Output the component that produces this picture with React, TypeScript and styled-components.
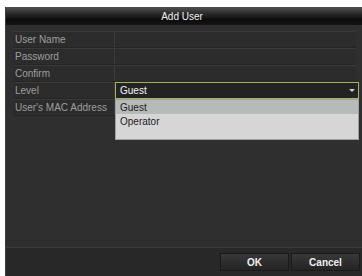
import React from "react";
import styled, { createGlobalStyle } from "styled-components";

const Global = createGlobalStyle`
  html, body { margin: 0; padding: 0; background: #ffffff; }
  body { font-family: "Liberation Sans", Arial, sans-serif; }
`;

const Frame = styled.div`
  margin: 7px 0 0 5px;
  width: 357px;
  height: 269px;
  background: #2f2f2f;
  display: flex;
  flex-direction: column;
  border-left: 1px solid #3c3c3c;
  box-sizing: border-box;
`;

const TitleBar = styled.div`
  height: 18px;
  background: linear-gradient(#525252 0%, #2c2c2c 35%, #0c0c0c 70%, #141414 100%);
  color: #f0f0f0;
  font-size: 10px;
  display: flex;
  align-items: center;
  justify-content: center;
  padding-right: 4px;
`;

const Body = styled.div`
  flex: 1;
  padding: 6px 0 0 7px;
  position: relative;
`;

const Form = styled.div`
  display: flex;
  flex-direction: column;
  width: 343px;
  position: relative;
`;

const Row = styled.div`
  display: grid;
  grid-template-columns: 102px 1fr;
  height: 17px;
  border-bottom: 1px solid #262626;
  border-top: 1px solid #393939;
  box-sizing: border-box;
  background: #2c2c2c;
`;

const Label = styled.div`
  color: #9e9e9e;
  font-size: 10px;
  display: flex;
  align-items: center;
  padding-left: 2px;
  border-right: 1px solid #3a3a3a;
  white-space: nowrap;
`;

const Value = styled.div`
  position: relative;
`;

const Select = styled.div`
  position: absolute;
  left: 0;
  right: -3px;
  top: -1px;
  height: 17px;
  box-sizing: border-box;
  border: 1px solid #a8b45a;
  background: #232323;
  color: #f4f4f4;
  font-size: 10px;
  display: flex;
  align-items: center;
  padding-left: 4px;
  justify-content: space-between;
`;

const Arrow = styled.span`
  width: 0;
  height: 0;
  border-left: 3px solid transparent;
  border-right: 3px solid transparent;
  border-top: 3px solid #d0d0d0;
  margin-right: 3px;
`;

const Dropdown = styled.div`
  position: absolute;
  left: 0;
  right: -3px;
  top: 16px;
  height: 41px;
  background: #d6d6d6;
  border: 1px solid #a0a0a0;
  box-sizing: border-box;
  z-index: 2;
  display: flex;
  flex-direction: column;
`;

const Item = styled.div<{ $active?: boolean }>`
  height: 14px;
  display: flex;
  align-items: center;
  padding-left: 4px;
  font-size: 10px;
  color: #222;
  background: ${(p) => (p.$active ? "#b6bab8" : "transparent")};
`;

const Footer = styled.div`
  height: 28px;
  border-top: 1px solid #3a3a3a;
  background: #282828;
  display: flex;
  justify-content: flex-end;
  align-items: center;
  gap: 2px;
  padding-right: 2px;
  margin-top: 8px;
`;

const Button = styled.div`
  width: 69px;
  height: 18px;
  background: linear-gradient(#383838, #242424);
  border: 1px solid #1a1a1a;
  box-sizing: border-box;
  color: #f0f0f0;
  font-size: 10px;
  font-weight: bold;
  display: flex;
  align-items: center;
  justify-content: center;
`;

const rows = ["User Name", "Password", "Confirm", "Level", "User's MAC Address"];

export default function App() {
  return (
    <>
      <Global />
      <Frame>
        <TitleBar>Add User</TitleBar>
        <Body>
          <Form>
            {rows.map((r) => (
              <Row key={r}>
                <Label>{r}</Label>
                <Value>
                  {r === "Level" && (
                    <>
                      <Select>
                        Guest
                        <Arrow />
                      </Select>
                      <Dropdown>
                        <Item $active>Guest</Item>
                        <Item>Operator</Item>
                      </Dropdown>
                    </>
                  )}
                </Value>
              </Row>
            ))}
          </Form>
        </Body>
        <Footer>
          <Button>OK</Button>
          <Button>Cancel</Button>
        </Footer>
      </Frame>
    </>
  );
}
